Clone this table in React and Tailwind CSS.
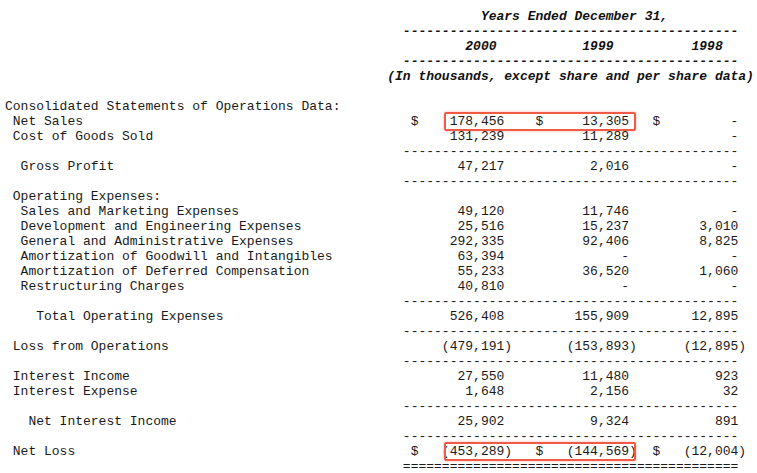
import React from 'react';

// column layout of the filing (monospace character positions)
const COLS = [
    { dollar: 52, end: 63 },
    { dollar: 68, end: 79 },
    { dollar: 83, end: 93 },
];

const WIDTH = 96;

function put(chars, col, text) {
    for (let i = 0; i < text.length; i++) chars[col + i] = text[i];
}

function row(label, vals = [], dollar = false) {
    const chars = Array(WIDTH).fill(' ');
    put(chars, 0, label);
    vals.forEach((v, i) => {
        const c = COLS[i];
        const end = v.startsWith('(') ? c.end + 1 : c.end;
        put(chars, end - v.length + 1, v);
        if (dollar) put(chars, c.dollar, '$');
    });
    return chars.join('').replace(/\s+$/, '');
}

function rule(ch) {
    return ' '.repeat(51) + ch.repeat(43);
}

const header = [
    ' '.repeat(61) + 'Years Ended December 31,',
    rule('-'),
    ' '.repeat(59) + '2000' + ' '.repeat(11) + '1999' + ' '.repeat(10) + '1998',
    rule('-'),
    ' '.repeat(49) + '(In thousands, except share and per share data)',
];

const body = [
    { text: '' },
    { text: 'Consolidated Statements of Operations Data:' },
    { text: row(' Net Sales', ['178,456', '13,305', '-'], true), boxed: true },
    { text: row(' Cost of Goods Sold', ['131,239', '11,289', '-']) },
    { text: rule('-') },
    { text: row('  Gross Profit', ['47,217', '2,016', '-']) },
    { text: rule('-') },
    { text: ' Operating Expenses:' },
    { text: row('  Sales and Marketing Expenses', ['49,120', '11,746', '-']) },
    { text: row('  Development and Engineering Expenses', ['25,516', '15,237', '3,010']) },
    { text: row('  General and Administrative Expenses', ['292,335', '92,406', '8,825']) },
    { text: row('  Amortization of Goodwill and Intangibles', ['63,394', '-', '-']) },
    { text: row('  Amortization of Deferred Compensation', ['55,233', '36,520', '1,060']) },
    { text: row('  Restructuring Charges', ['40,810', '-', '-']) },
    { text: rule('-') },
    { text: row('    Total Operating Expenses', ['526,408', '155,909', '12,895']) },
    { text: rule('-') },
    { text: row(' Loss from Operations', ['(479,191)', '(153,893)', '(12,895)']) },
    { text: rule('-') },
    { text: row(' Interest Income', ['27,550', '11,480', '923']) },
    { text: row(' Interest Expense', ['1,648', '2,156', '32']) },
    { text: rule('-') },
    { text: row('   Net Interest Income', ['25,902', '9,324', '891']) },
    { text: rule('-') },
    { text: row(' Net Loss', ['(453,289)', '(144,569)', '(12,004)'], true), boxed: true },
    { text: rule('=') },
];

export default function App() {
    return (
        <div className="w-[757px] h-[473px] overflow-hidden bg-white pl-[5px] pt-[9px] text-[13px] leading-[15px] text-[#1a1a1a] font-['Liberation_Mono','Courier_New',monospace]">
            {/* ── Column headings ── */}
            {header.map((line, i) => (
                <div key={`h${i}`} className="h-[15px] whitespace-pre font-bold italic text-[#111]">
                    {line}
                </div>
            ))}

            {/* ── Statement rows ── */}
            {body.map((line, i) => (
                <div key={`b${i}`} className="relative h-[15px] whitespace-pre">
                    {line.text}
                    {line.boxed && (
                        <div className="absolute top-[-2px] left-[calc(56ch+2px)] w-[calc(25ch-3px)] h-[19px] rounded-[2px] border-2 border-[#ef5b45] shadow-[0_0_3px_rgba(239,91,69,0.45)]" />
                    )}
                </div>
            ))}
        </div>
    );
}
